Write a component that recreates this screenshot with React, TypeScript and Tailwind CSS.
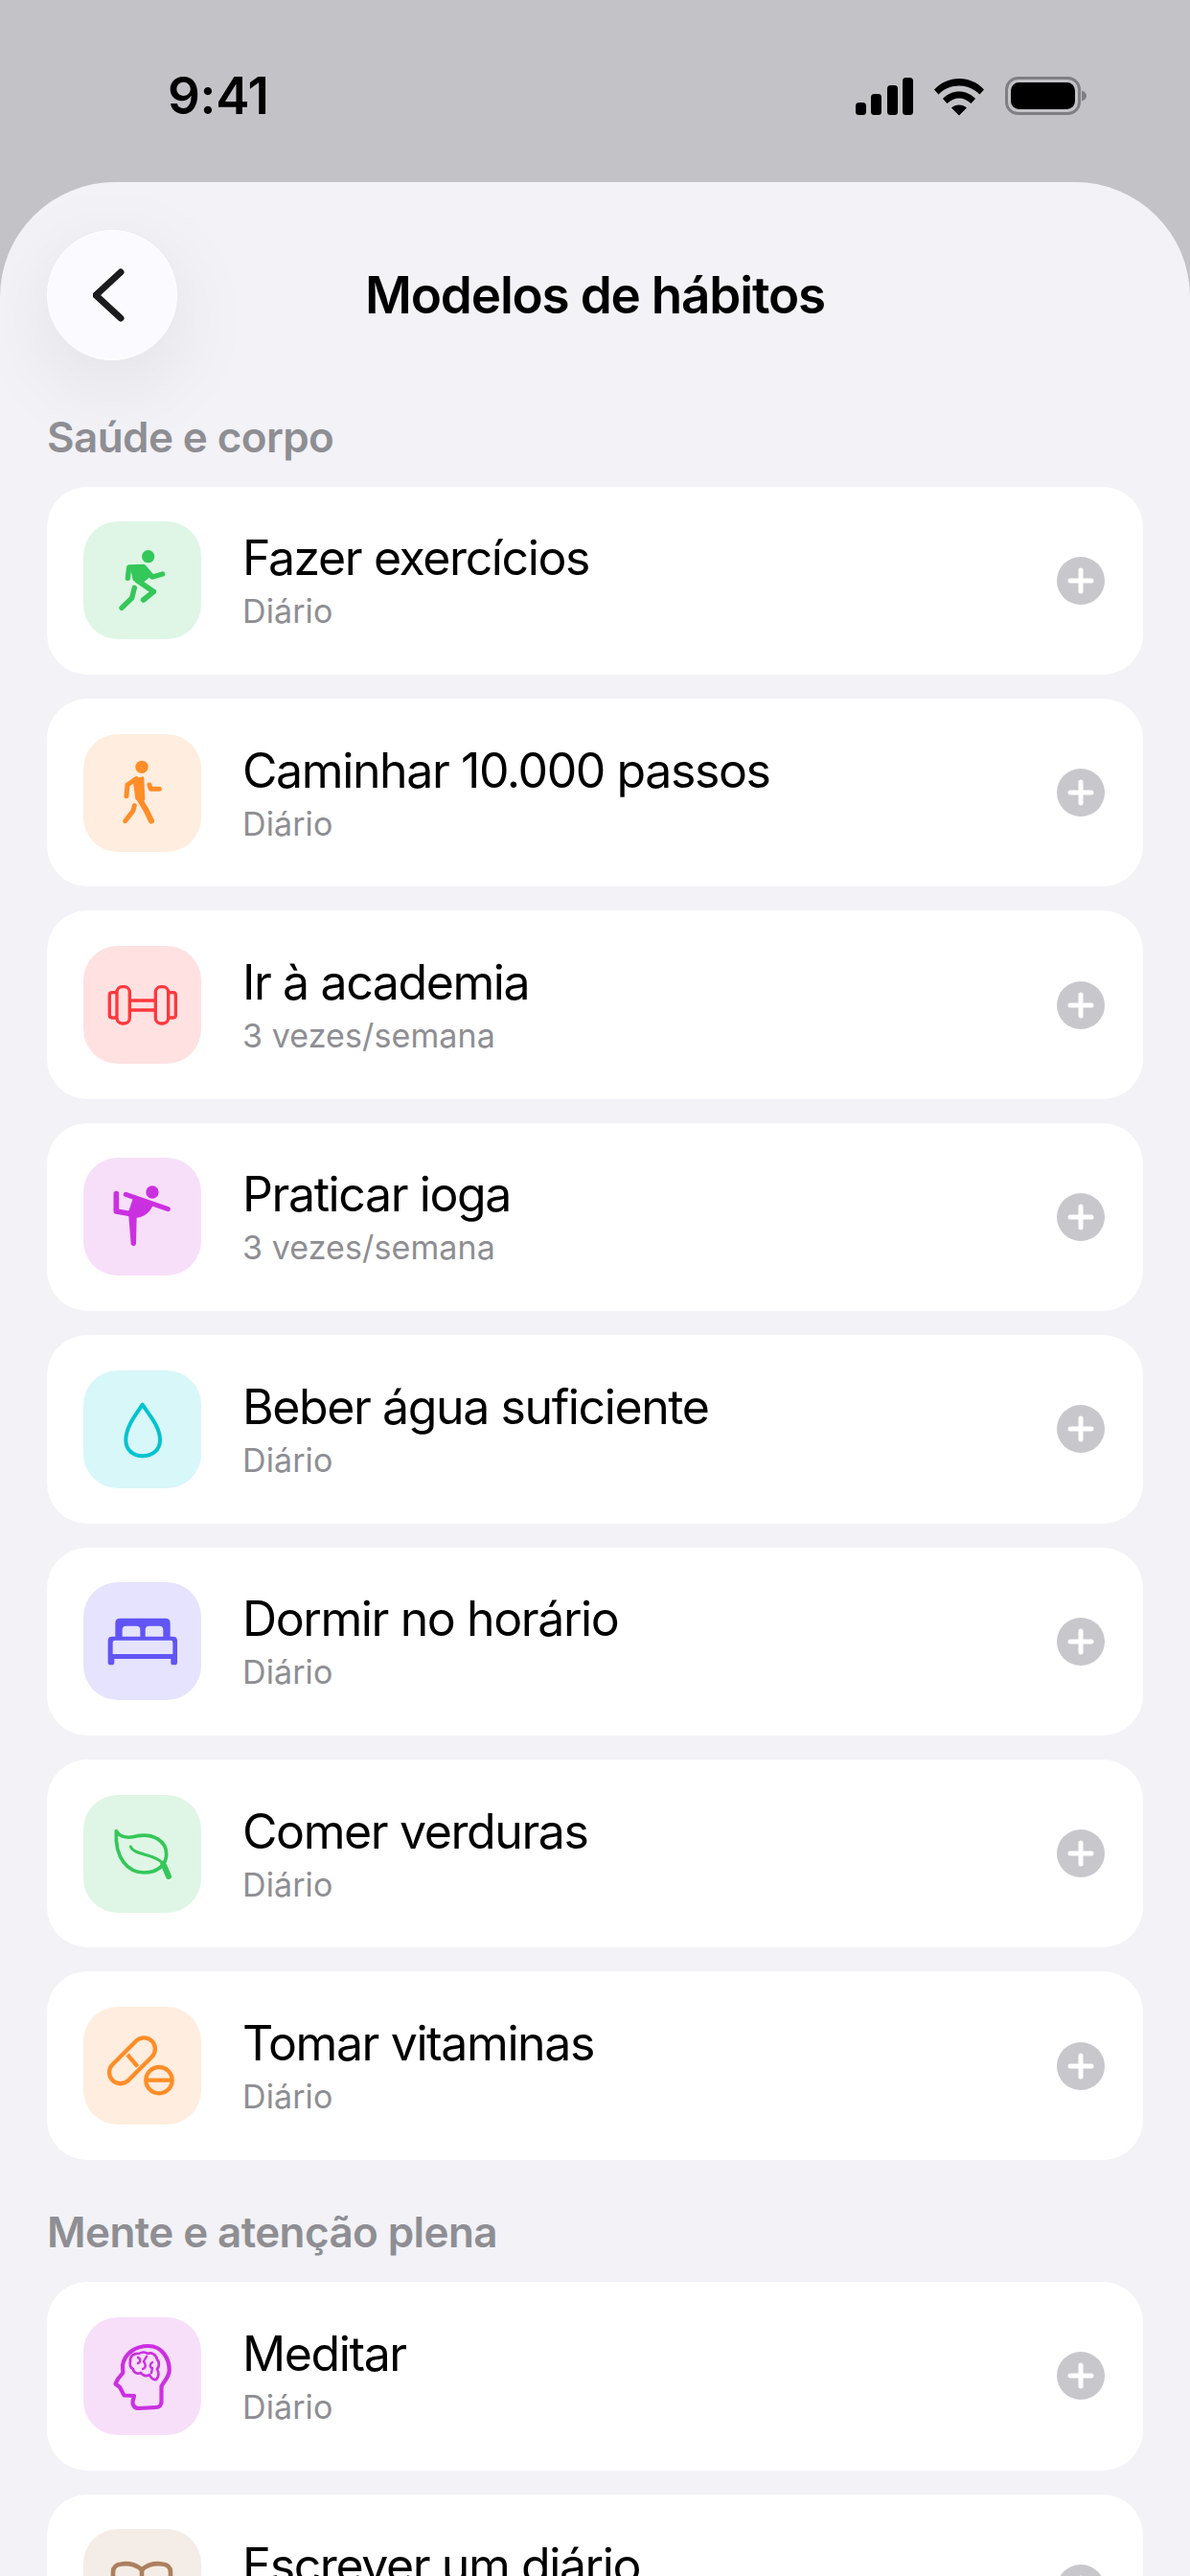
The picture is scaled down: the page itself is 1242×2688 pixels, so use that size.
import React from "react";

const Runner = () => (
  <g transform="translate(-80,-72)" fill="none" stroke="#34c759" strokeWidth="16" strokeLinecap="round" strokeLinejoin="round">
    <circle cx="283" cy="182" r="20" fill="#34c759" stroke="none" />
    <path d="M219 250L223 216L268 214L296 246L328 237" />
    <path d="M232 216L270 216L288 240L262 262L240 254Z" fill="#34c759" strokeWidth="10" />
    <path d="M250 258L300 292L268 318" strokeWidth="17" />
    <path d="M240 280L232 312L200 343" />
  </g>
);

const Walker = () => (
  <g transform="translate(-80,-738)" fill="none" stroke="#ff8d28" strokeWidth="15" strokeLinecap="round" strokeLinejoin="round">
    <circle cx="263" cy="841" r="20" fill="#ff8d28" stroke="none" />
    <path d="M215 932L218 897L246 878" />
    <path d="M240 882L265 876L268 942L248 940Z" fill="#ff8d28" strokeWidth="10" />
    <path d="M254 938L276 975L293 1010" strokeWidth="18" />
    <path d="M287 897L291 910L318 910" />
    <path d="M240 962L236 978L211 1010" />
  </g>
);

const Dumbbell = () => (
  <g transform="translate(-80,-81)" fill="none" stroke="#ff383c" strokeWidth="10" strokeLinejoin="round">
    <rect x="185" y="209" width="40" height="115" rx="17" />
    <rect x="306" y="209" width="40" height="115" rx="17" />
    <path d="M185 227L170 227Q162 227 162 235L162 298Q162 306 170 306L185 306" />
    <path d="M346 227L361 227Q369 227 369 235L369 298Q369 306 361 306L346 306" />
    <path d="M225 252L306 252M225 282L306 282" />
  </g>
);

const Yoga = () => (
  <g transform="translate(-80,-747)" fill="#cb30e0" stroke="none">
    <circle cx="296" cy="855" r="20" />
    <path d="M213 862L345 908" fill="none" stroke="#cb30e0" strokeWidth="15" strokeLinecap="round" />
    <path d="M183 860L183 915L222 922" fill="none" stroke="#cb30e0" strokeWidth="17" strokeLinecap="round" strokeLinejoin="round" />
    <path d="M222 914L235 876L297 898C288 920 268 934 247 935L245 1018Q237 1030 229 1018L222 930Z" />
  </g>
);

const Drop = () => (
  <g transform="translate(-80,-90)" fill="none" stroke="#00c3d0" strokeWidth="12" strokeLinejoin="round">
    <path d="M265 197C245 228 213 265 213 308C213 338 235 358 265 358C297 358 320 338 320 308C320 265 285 228 265 197Z" />
  </g>
);

const Bed = () => (
  <g transform="translate(-80,-755)" fill="#6155f5">
    <path
      fillRule="evenodd"
      d="M195 868L337 868Q352 868 352 883L352 925L361 925Q374 925 374 938L374 1006Q374 1014 366 1014L362 1014Q354 1014 354 1006L354 995L177 995L177 1006Q177 1014 169 1014L165 1014Q157 1014 157 1006L157 938Q157 925 170 925L180 925L180 883Q180 868 195 868ZM214 892Q202 892 202 904L202 925L258 925L258 904Q258 892 246 892ZM286 892Q274 892 274 904L274 925L330 925L330 904Q330 892 318 892ZM178 937Q172 937 172 943L172 980L360 980L360 943Q360 937 354 937Z"
    />
  </g>
);

const Leaf = () => (
  <g transform="translate(-80,-100)" fill="none" stroke="#34c759" strokeWidth="11" strokeLinecap="round" strokeLinejoin="round">
    <path d="M183 213C195 235 225 235 250 228C300 220 340 245 340 285C340 320 310 343 270 343C220 343 178 300 183 213Z" />
    <path d="M228 262C240 290 300 282 328 313" strokeWidth="9" />
    <path d="M330 315L347 355" strokeWidth="18" />
  </g>
);

const Pills = () => (
  <g transform="translate(-80,-763)" fill="none" stroke="#ff8d28" strokeWidth="13" strokeLinecap="round">
    <rect x="146" y="897" width="174" height="70" rx="35" transform="rotate(-45 233 932)" />
    <path d="M218 913L250 950" strokeLinecap="butt" />
    <circle cx="317" cy="993" r="41" />
    <path d="M278 993L356 993" strokeLinecap="butt" />
  </g>
);

const Brain = () => (
  <g fill="none" stroke="#cb30e0" strokeLinecap="round" strokeLinejoin="round">
    <path strokeWidth="4.2" d="M41 50C43 38 54 30 68 30C82 30 90 43 89.7 56C89 63 84 67 81.5 72L81.5 88C81.5 92 79 94 76 94L58 95C53 95 51 91 51.5 88L53 82L42.5 81.5L38 73L33.5 69.5L36 64.5L41.3 58Z" />
    <path strokeWidth="2.7" d="M49 46C48 41 53 37 58 38C61 36 65 36 67 38C71 36 76 39 77 44C80 47 79 52 77 54C79 58 79 62 76 65C72 66 70 62 69 60C66 62 62 61 60 58C56 60 52 57 52 54C49 53 48 49 49 46Z" />
    <path strokeWidth="2.4" d="M57 42C60 43 60 47 57 48M66 41L63 46C65 49 66 52 62 54M72 47C69 49 69 52 72 53L71 58" />
  </g>
);

const Book = () => (
  <g fill="none" stroke="#ac7f5e" strokeWidth="4.6" strokeLinecap="round" strokeLinejoin="round">
    <path d="M61 43C57 38 48 35 40 36.5C34 37 31 40 31 45L31 82C42 81 54 82 61 88C68 82 80 81 91 82L91 45C91 40 88 37 82 36.5C74 35 65 38 61 43ZM61 43L61 88" />
  </g>
);

type Habit = { title: string; sub: string; tile: string; icon: React.ReactNode; box: string };

const fine = "0 0 123 123";
const zoomed = "0 0 369 369";

const health: Habit[] = [
  { title: "Fazer exercícios", sub: "Diário", tile: "bg-[#dff6e6]", icon: <Runner />, box: zoomed },
  { title: "Caminhar 10.000 passos", sub: "Diário", tile: "bg-[#ffeddf]", icon: <Walker />, box: zoomed },
  { title: "Ir à academia", sub: "3 vezes/semana", tile: "bg-[#ffe1e2]", icon: <Dumbbell />, box: zoomed },
  { title: "Praticar ioga", sub: "3 vezes/semana", tile: "bg-[#f7dffa]", icon: <Yoga />, box: zoomed },
  { title: "Beber água suficiente", sub: "Diário", tile: "bg-[#d8f7f9]", icon: <Drop />, box: zoomed },
  { title: "Dormir no horário", sub: "Diário", tile: "bg-[#e6e3fe]", icon: <Bed />, box: zoomed },
  { title: "Comer verduras", sub: "Diário", tile: "bg-[#dff6e6]", icon: <Leaf />, box: zoomed },
  { title: "Tomar vitaminas", sub: "Diário", tile: "bg-[#ffeddf]", icon: <Pills />, box: zoomed },
];

const mind: Habit[] = [
  { title: "Meditar", sub: "Diário", tile: "bg-[#f7dffa]", icon: <Brain />, box: fine },
  { title: "Escrever um diário", sub: "Diário", tile: "bg-[#f4ece6]", icon: <Book />, box: fine },
];

function Row({ h }: { h: Habit }) {
  return (
    <div className="flex h-[196.4px] shrink-0 items-center rounded-[42px] bg-white pl-[38px] pr-[40px]">
      <div className={`h-[123px] w-[123px] shrink-0 overflow-hidden rounded-[36px] ${h.tile}`}>
        <svg width="123" height="123" viewBox={h.box}>
          {h.icon}
        </svg>
      </div>
      <div className="ml-[43px] flex min-w-0 flex-1 flex-col pb-[1px]">
        <div className="text-[50px] leading-[60px] tracking-[-1.4px] text-black">{h.title}</div>
        <div className="mt-[6px] text-[34px] leading-[40px] tracking-[0.1px] text-[#8e8e93]">{h.sub}</div>
      </div>
      <svg className="shrink-0" width="50" height="50" viewBox="0 0 50 50">
        <circle cx="25" cy="25" r="25" fill="#c7c7cc" />
        <path d="M25 14V36M14 25H36" stroke="#fff" strokeWidth="5" strokeLinecap="round" />
      </svg>
    </div>
  );
}

export default function App() {
  return (
    <div
      className="flex h-[2688px] w-[1242px] flex-col overflow-hidden bg-[#c3c2c7] text-black"
      style={{ fontFamily: "Inter, 'Liberation Sans', sans-serif" }}
    >
      <div className="flex h-[190px] shrink-0 items-start justify-between pl-[175px] pr-[106px] pt-[69px]">
        <div className="text-[53px] font-semibold leading-[62px] tracking-[-0.3px]">9:41</div>
        <svg className="mt-[11px]" width="243" height="42" viewBox="0 0 243 42">
          <rect x="0" y="27" width="11" height="13" rx="3.5" />
          <rect x="16" y="18" width="11" height="22" rx="3.5" />
          <rect x="33" y="9" width="11" height="31" rx="3.5" />
          <rect x="49" y="1" width="11" height="39" rx="3.5" />
          <path d="M82 13.5C96 -2 120 -2 134 13.5L129.5 18.5C118 6.5 98 6.5 86.5 18.5ZM91 23C100 13 116 13 125 23L120.5 28C113 20.5 103 20.5 95.5 28ZM100 32.5C104 28.5 112 28.5 116 32.5L108 40.5Z" />
          <rect x="157.5" y="1.5" width="76" height="37" rx="12" fill="none" stroke="#7f7f83" strokeWidth="3" />
          <rect x="162" y="6" width="67" height="28" rx="8.5" />
          <path d="M236 14.5Q241 16.5 241 20Q241 23.5 236 25.5Z" fill="#7f7f83" />
        </svg>
      </div>

      <div className="flex min-h-0 flex-1 flex-col overflow-hidden rounded-t-[120px] bg-[#f2f2f7] px-[49px]">
        <div className="mt-[50px] grid shrink-0 grid-cols-[136px_1fr_136px] items-center">
          <div className="flex h-[136px] w-[136px] items-center justify-center rounded-full border border-[#ffffff] bg-[#fbfbff] shadow-[0_24px_90px_rgba(0,0,0,0.08)]">
            <svg width="40" height="56" viewBox="0 0 40 56" fill="none">
              <path d="M29 4L3 28L29 52" stroke="#1c1c1e" strokeWidth="7" strokeLinecap="round" strokeLinejoin="round" />
            </svg>
          </div>
          <div className="text-center text-[53px] font-semibold leading-[64px] tracking-[-1.2px]">Modelos de hábitos</div>
          <div />
        </div>

        <div className="mt-[54px] shrink-0 text-[44px] font-semibold leading-[52px] tracking-[-0.6px] text-[#8e8e93]">Saúde e corpo</div>
        <div className="mt-[25.6px] flex shrink-0 flex-col gap-[25px]">
          {health.map((h) => (
            <Row key={h.title} h={h} />
          ))}
        </div>

        <div className="mt-[49.5px] shrink-0 text-[44px] font-semibold leading-[52px] tracking-[-0.6px] text-[#8e8e93]">Mente e atenção plena</div>
        <div className="mt-[26px] flex shrink-0 flex-col gap-[25px]">
          {mind.map((h) => (
            <Row key={h.title} h={h} />
          ))}
        </div>
      </div>
    </div>
  );
}
